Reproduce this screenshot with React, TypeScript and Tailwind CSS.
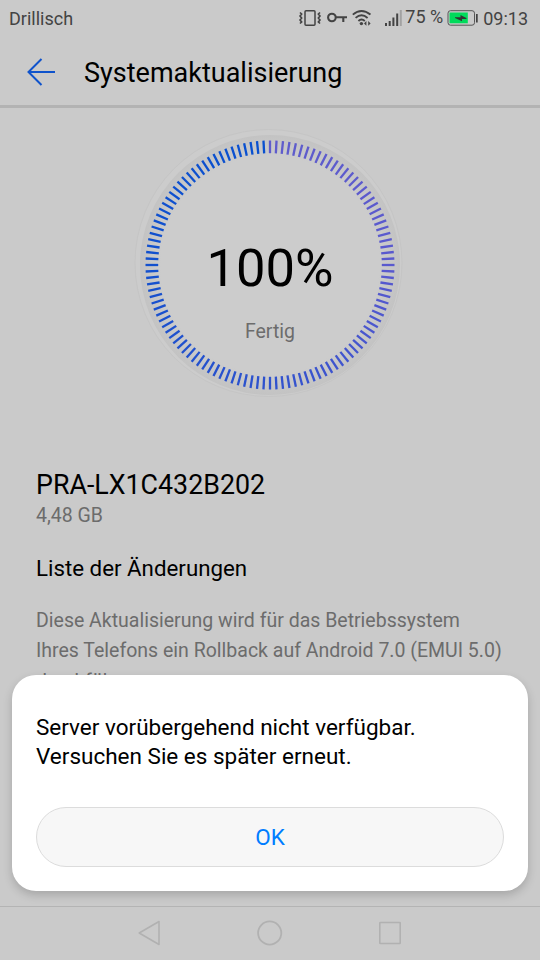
const TICK_COUNT = 120;

const STOPS = [
  { at: 0, rgb: [95, 92, 204] },
  { at: 0.25, rgb: [89, 89, 206] },
  { at: 0.5, rgb: [47, 82, 206] },
  { at: 0.75, rgb: [18, 80, 206] },
  { at: 1, rgb: [8, 80, 208] },
];

function tickColor(t: number): string {
  const i = Math.min(Math.floor(t * 4), 3);
  const a = STOPS[i];
  const b = STOPS[i + 1];
  const f = (t - a.at) / (b.at - a.at);
  const c = a.rgb.map((v, k) => Math.round(v + (b.rgb[k] - v) * f));
  return `rgb(${c.join(",")})`;
}

function StatusBar() {
  return (
    <div className="flex h-9 shrink-0 items-center justify-between pl-[9px] pr-3 text-[18px] leading-none text-[#434343]">
      <span className="pt-px">Drillisch</span>
      <div className="flex items-center">
        {/* vibrate */}
        <svg className="mr-[6px]" width="22" height="18" viewBox="0 0 22 18" fill="none" stroke="#434343">
          <rect x="6" y="1.8" width="10" height="14.4" rx="1" strokeWidth="1.5" />
          <path d="M1 3.5l1.6 1.5L1 7l1.6 2L1 11l1.6 2L1 14.5M21 3.5L19.4 5 21 7l-1.6 2 1.6 2-1.6 2 1.6 1.5" strokeWidth="1.7" />
        </svg>
        {/* vpn key */}
        <svg className="mr-[5px]" width="20" height="18" viewBox="0 0 20 18" fill="none" stroke="#434343" strokeWidth="2.1">
          <circle cx="4.9" cy="8.5" r="3.8" />
          <path d="M8.6 8.2H20M16.3 8.2v4.8" />
        </svg>
        {/* wifi */}
        <svg className="mr-[14px]" width="19" height="18" viewBox="0 0 19 18" fill="none" stroke="#434343">
          <path d="M.8 5.6Q9.5-1.8 18.4 5.6M3.6 8.9Q9.5 3.8 15.6 8.9M6.4 12Q9.5 9.2 12.8 12" strokeWidth="1.9" />
          <circle cx="9.4" cy="14.6" r="1.7" fill="#434343" stroke="none" />
          <path d="M12 14.4l2.4-2.4v4.8zM18.6 14.4l-2.4-2.4v4.8z" fill="#434343" stroke="none" />
        </svg>
        {/* signal */}
        <svg className="mr-[3px]" width="17" height="18" viewBox="0 0 17 18">
          <path d="M0 14h2v3H0zM3.7 12h2v5h-2zM7.4 8.5h2V17h-2zM11.2 4.5h2V17h-2z" fill="#434343" />
          <path d="M14.8 1h2v16h-2z" fill="#a2a2a2" />
        </svg>
        <span className="mr-[4px] pb-0.5">75 %</span>
        {/* battery */}
        <svg className="mr-[5px]" width="31" height="16" viewBox="0 0 31 16">
          <rect x="1" y=".7" width="26.5" height="14.5" rx="2.5" fill="none" stroke="#555" />
          <path d="M2.5 2.5h18.3v10.8H2.5z" fill="#00db5b" />
          <path d="M8 7.2h5.5V5l6.3 3.2-1 .9H15v2.2L8 8z" fill="#333" />
          <path d="M29 4h1.7v8.5H29z" fill="#434343" />
        </svg>
        <span className="pt-px">09:13</span>
      </div>
    </div>
  );
}

function ProgressRing() {
  return (
    <div className="grid shrink-0 place-items-center">
      <svg className="col-start-1 row-start-1" width="272" height="272" viewBox="-136 -137 272 272" fill="none">
        <defs>
          <radialGradient id="disc" gradientUnits="userSpaceOnUse" cx="0" cy="0" r="130">
            <stop offset="0.84" stopColor="#cccccc" />
            <stop offset="0.93" stopColor="#c7c7c7" />
            <stop offset="1" stopColor="#c3c3c3" />
          </radialGradient>
        </defs>
        <circle cx="-1.5" cy="-2" r="133.5" fill="#cccccc" stroke="#c5c5c5" />
        <circle r="130" fill="url(#disc)" />
        {Array.from({ length: TICK_COUNT }, (_, i) => (
          <path
            key={i}
            d="M0-124.5V-111.8"
            stroke={tickColor(i / TICK_COUNT)}
            strokeWidth="2.3"
            transform={`rotate(${i * (360 / TICK_COUNT)})`}
          />
        ))}
      </svg>
      <div className="col-start-1 row-start-1 flex flex-col items-center pt-[52px]">
        <span className="text-[52.5px] leading-[64px] text-black">100%</span>
        <span className="mt-5 text-[19.5px] leading-6 text-[#6c6c6c]">Fertig</span>
      </div>
    </div>
  );
}

function NavBar() {
  return (
    <div className="flex h-[54px] shrink-0 items-center justify-center gap-[95px] border-t border-[#b4b4b4] pb-0.5">
      <svg width="24" height="26" viewBox="0 0 24 26" fill="none" stroke="#b1b1b1" strokeWidth="1.6" strokeLinejoin="round">
        <path d="M1.2 13L21 1.5v23z" />
      </svg>
      <svg width="26" height="26" viewBox="0 0 26 26" fill="none" stroke="#b1b1b1" strokeWidth="1.8">
        <circle cx="12.7" cy="13" r="11.6" />
      </svg>
      <svg width="24" height="26" viewBox="0 0 24 26" fill="none" stroke="#b1b1b1" strokeWidth="1.6">
        <rect x="1.8" y="2.5" width="20.4" height="21" rx=".5" />
      </svg>
    </div>
  );
}

function Dialog() {
  return (
    <div className="absolute inset-x-3 top-[675px] flex h-[216px] flex-col rounded-[24px] bg-white px-6 pb-6 pt-[38px] shadow-[0_4px_10px_rgba(0,0,0,0.18)]">
      <p className="text-[22.5px] leading-[29px] text-black">
        Server vorübergehend nicht verfügbar.
        <br />
        Versuchen Sie es später erneut.
      </p>
      <button className="mt-auto h-[60px] w-full rounded-full border border-[#dcdcdc] bg-[#f7f7f7] pt-0.5 text-[22.5px] text-[#007dff]">
        OK
      </button>
    </div>
  );
}

export default function App() {
  return (
    <div className="relative flex h-[960px] w-[540px] flex-col overflow-hidden bg-[#cacaca] font-['Roboto',sans-serif]">
      <StatusBar />
      <header className="flex h-[72px] shrink-0 items-center border-b-[3px] border-[#b3b3b3] pl-[27px] pt-[3px]">
        <svg width="28" height="28" viewBox="0 0 28 28" fill="none" stroke="#0f53cc" strokeWidth="2">
          <path d="M28 14H2M14.5 1L1.5 14l13 13" />
        </svg>
        <h1 className="ml-[29px] pt-0.5 text-[27px] leading-8 text-black">Systemaktualisierung</h1>
      </header>
      <main className="flex min-h-0 flex-1 flex-col overflow-hidden pt-5">
        <ProgressRing />
        <section className="mt-[70px] px-9">
          <h2 className="text-[26.8px] leading-[30px] text-black">PRA-LX1C432B202</h2>
          <p className="mt-1 text-[19.5px] leading-6 text-[#6c6c6c]">4,48 GB</p>
          <h3 className="mt-[27px] text-[22.3px] leading-[27px] text-black">Liste der Änderungen</h3>
          <p className="mt-6 text-[19.5px] leading-[30.4px] whitespace-nowrap text-[#6c6c6c]">
            Diese Aktualisierung wird für das Betriebssystem
            <br />
            Ihres Telefons ein Rollback auf Android 7.0 (EMUI 5.0)
            <br />
            durchführen.
          </p>
        </section>
      </main>
      <NavBar />
      <Dialog />
    </div>
  );
}
